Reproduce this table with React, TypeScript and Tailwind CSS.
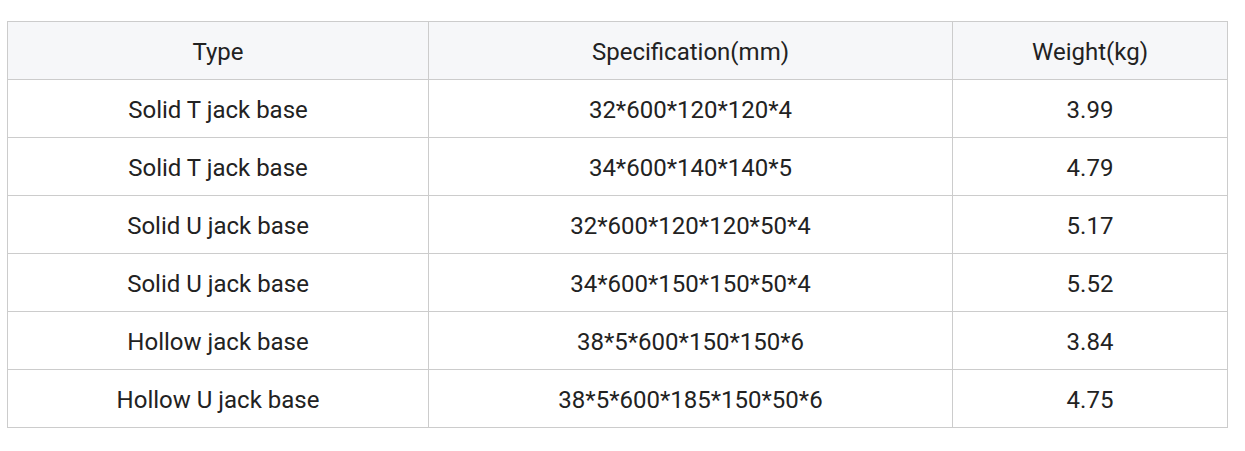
const rows = [
  ["Solid T jack base", "32*600*120*120*4", "3.99"],
  ["Solid T jack base", "34*600*140*140*5", "4.79"],
  ["Solid U jack base", "32*600*120*120*50*4", "5.17"],
  ["Solid U jack base", "34*600*150*150*50*4", "5.52"],
  ["Hollow jack base", "38*5*600*150*150*6", "3.84"],
  ["Hollow U jack base", "38*5*600*185*150*50*6", "4.75"],
];

export default function App() {
  return (
    <div className="bg-white w-[1245px] h-[451px] pt-[21px] pl-[7px] font-['Roboto',sans-serif] text-[#222]">
      <table className="w-[1220px] table-fixed border-collapse text-[24px] leading-[28px]">
        <colgroup>
          <col className="w-[421px]" />
          <col className="w-[524px]" />
          <col className="w-[275px]" />
        </colgroup>
        <thead>
          <tr className="bg-[#f6f7f9] h-[58px]">
            <th className="border border-[#cccccc] font-normal text-center pt-[2px]">Type</th>
            <th className="border border-[#cccccc] font-normal text-center pt-[2px]">Specification(mm)</th>
            <th className="border border-[#cccccc] font-normal text-center pt-[2px]">Weight(kg)</th>
          </tr>
        </thead>
        <tbody>
          {rows.map((r, i) => (
            <tr key={i} className="h-[58px]">
              {r.map((c, j) => (
                <td key={j} className="border border-[#cccccc] text-center pt-[2px]">
                  {c}
                </td>
              ))}
            </tr>
          ))}
        </tbody>
      </table>
    </div>
  );
}
